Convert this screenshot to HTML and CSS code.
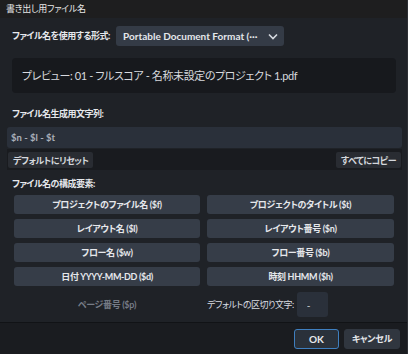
FILE: index.html
```html
<!DOCTYPE html>
<html lang="ja">
<head>
    <meta charset="UTF-8">
    <meta name="viewport" content="width=device-width, initial-scale=1.0">
    <title>書き出し用ファイル名</title>
    <link rel="stylesheet" href="styles.css">
</head>
<body>
    <div class="dialog">
        <div class="titlebar">書き出し用ファイル名</div>

        <div class="content">
            <div class="format-row">
                <span class="label">ファイル名を使用する形式:</span>
                <button class="dropdown">
                    <span>Portable Document Format (···</span>
                    <svg width="10" height="7" viewBox="0 0 10 7"><path d="M1 1.5 L5 5.5 L9 1.5" fill="none" stroke="#d6dae0" stroke-width="1.6"/></svg>
                </button>
            </div>

            <div class="preview">プレビュー: 01 - フルスコア - 名称未設定のプロジェクト 1.pdf</div>

            <div class="label section-label">ファイル名生成用文字列:</div>
            <input type="text" class="pattern" value="$n - $l - $t">
            <div class="pattern-tools">
                <button class="small-btn">デフォルトにリセット</button>
                <button class="small-btn">すべてにコピー</button>
            </div>

            <div class="label section-label tokens-label">ファイル名の構成要素:</div>
            <div class="tokens">
                <button class="token">プロジェクトのファイル名 ($f)</button>
                <button class="token">プロジェクトのタイトル ($t)</button>
                <button class="token">レイアウト名 ($l)</button>
                <button class="token">レイアウト番号 ($n)</button>
                <button class="token">フロー名 ($w)</button>
                <button class="token">フロー番号 ($b)</button>
                <button class="token">日付 YYYY-MM-DD ($d)</button>
                <button class="token">時刻 HHMM ($h)</button>
            </div>

            <div class="last-row">
                <span class="token-disabled">ページ番号 ($p)</span>
                <div class="separator">
                    <span>デフォルトの区切り文字:</span>
                    <input type="text" class="sep-input" value="-">
                </div>
            </div>
        </div>

        <div class="footer">
            <button class="btn ok">OK</button>
            <button class="btn">キャンセル</button>
        </div>
    </div>
</body>
</html>
```

FILE: styles.css
```css
* {
    box-sizing: border-box;
}

body {
    margin: 0;
    background-color: #1f2227;
    font-family: Lato, "Noto Sans CJK JP", sans-serif;
    font-feature-settings: "palt";
    color: #e4e6ea;
}

button, input {
    font-family: inherit;
    font-feature-settings: "palt";
}

.dialog {
    width: 408px;
    height: 354px;
    display: flex;
    flex-direction: column;
    border-right: 1px solid #2c2f34;
}

.titlebar {
    height: 18px;
    background-color: #1e1e1f;
    font-size: 9px;
    letter-spacing: -0.3px;
    line-height: 18px;
    padding-left: 6px;
    color: #e8e8e8;
}

.content {
    flex: 1;
    padding: 8px 6px 0 7px;
}

.label {
    font-size: 9px;
    line-height: 14px;
    letter-spacing: -0.5px;
    font-weight: bold;
    color: #e6e8ec;
}

.format-row {
    display: flex;
    align-items: center;
    gap: 10px;
    padding-left: 5px;
}

.format-row .label {
    width: 94px;
    white-space: nowrap;
}

.dropdown {
    width: 168px;
    height: 20px;
    background-color: #343b46;
    border: none;
    border-radius: 3px;
    color: #e4e7eb;
    font-size: 10px;
    font-weight: bold;
    white-space: nowrap;
    display: flex;
    align-items: center;
    justify-content: space-between;
    padding: 0 6px 0 7px;
}

.preview {
    margin: 12px 5px 0 5px;
    height: 35px;
    background-color: #17191d;
    border-radius: 4px;
    padding-left: 10px;
    font-size: 11px;
    letter-spacing: -0.4px;
    line-height: 35px;
    color: #d8dadf;
}

.section-label {
    margin: 14px 0 0 5px;
}

.pattern {
    display: block;
    width: 395px;
    height: 21px;
    margin-top: 6px;
    background-color: #2a303a;
    border: none;
    border-radius: 3px;
    padding-left: 4px;
    color: #aab0ba;
    font-size: 9.5px;
    font-weight: bold;
}

.pattern-tools {
    display: flex;
    justify-content: space-between;
    width: 395px;
    height: 21px;
    margin-top: 1px;
    padding: 3px 1px 0 1px;
    background-color: #191b1f;
}

.small-btn {
    height: 16px;
    background-color: #292c32;
    border: none;
    border-radius: 2px;
    color: #d4d7dc;
    font-size: 9px;
    letter-spacing: -0.5px;
    font-weight: bold;
    padding: 0 5px;
}

.tokens-label {
    margin-top: 7px;
}

.tokens {
    display: grid;
    grid-template-columns: 186px 187px;
    column-gap: 7px;
    row-gap: 5px;
    margin: 4px 0 0 7px;
}

.token {
    height: 19px;
    background-color: #363d48;
    border: none;
    border-radius: 3px;
    color: #e6e8ec;
    font-size: 9px;
    letter-spacing: -0.35px;
    font-weight: bold;
    padding: 0;
}

.last-row {
    display: flex;
    align-items: center;
    margin-top: 6px;
    height: 25px;
}

.token-disabled {
    width: 200px;
    text-align: center;
    font-size: 9px;
    letter-spacing: -0.35px;
    font-weight: bold;
    color: #767c86;
}

.separator {
    display: flex;
    align-items: center;
    gap: 3px;
    font-size: 9px;
    letter-spacing: -0.5px;
    color: #dadde2;
}

.sep-input {
    width: 31px;
    height: 25px;
    background-color: #2a303a;
    border: none;
    border-radius: 3px;
    color: #d8dbe0;
    font-size: 10px;
    padding-left: 10px;
}

.footer {
    height: 32px;
    background-color: #1a1c20;
    border-top: 1px solid #111316;
    display: flex;
    justify-content: flex-end;
    align-items: center;
    gap: 5px;
    padding-right: 7px;
}

.btn {
    height: 20px;
    background-color: #30363f;
    border: 1px solid #30363f;
    border-radius: 3px;
    color: #e6e8ec;
    font-size: 9px;
    letter-spacing: -0.3px;
    font-weight: bold;
    padding: 0 7px;
}

.btn.ok {
    width: 45px;
    font-size: 10px;
    letter-spacing: 0;
    border-color: #3f7fbf;
    background-color: #2a313a;
}
```
